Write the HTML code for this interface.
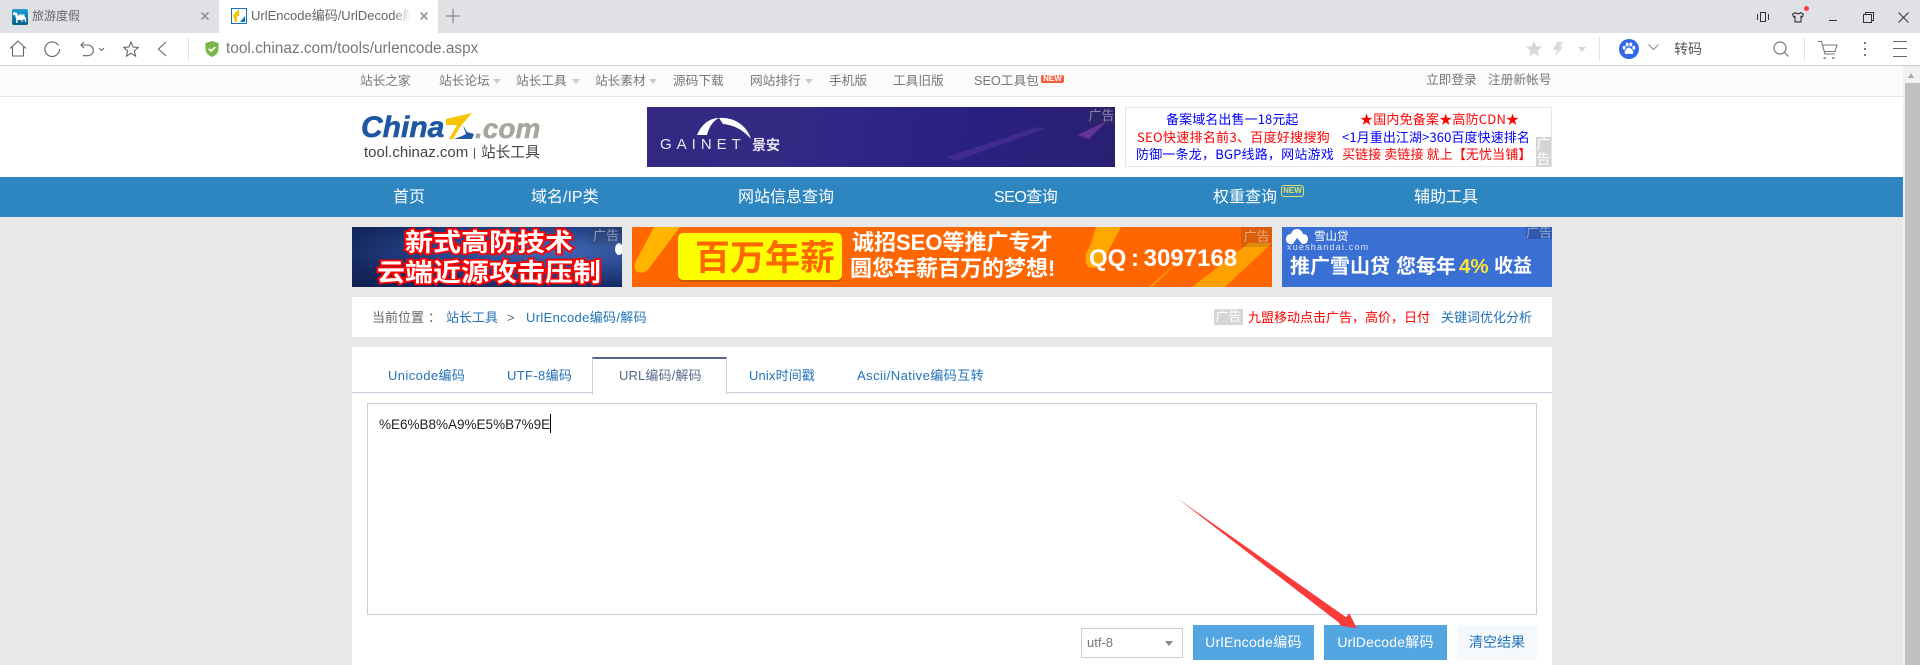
<!DOCTYPE html>
<html lang="zh"><head><meta charset="utf-8"><title>UrlEncode编码/UrlDecode解码</title>
<style>
html,body{margin:0;padding:0;width:1920px;height:665px;overflow:hidden;background:#e8e8e8}
body{position:relative;font-family:"Liberation Sans","Noto Sans CJK SC",sans-serif;font-size:13px;color:#777}
div,span,svg{position:absolute}
.t{white-space:nowrap;line-height:20px}
.n{color:#fff;font-size:16px}
.s{color:#777;font-size:12.7px}
.a{color:#2272b9;font-size:13px}
.c{width:0;height:0;border-left:4px solid transparent;border-right:4px solid transparent;border-top:5px solid #bbb}
.b{font-family:"WenQuanYi Zen Hei","Noto Sans CJK SC",sans-serif;font-size:13px;line-height:18px;white-space:nowrap}
.l{background:rgba(60,60,60,.18);color:rgba(255,255,255,.45);font-size:13px;line-height:17px;text-align:center;height:17px}
</style></head><body>
<!-- tab strip -->
<div style="left:0;top:0;width:1920px;height:33px;background:#e0e1e5"></div>
<div style="left:219px;top:0;width:219px;height:33px;background:#fff"></div>
<svg style="left:12px;top:9px" width="16" height="16" viewBox="0 0 16 16"><defs><linearGradient id="g" x1="0" y1="0" x2="0" y2="1"><stop offset="0" stop-color="#1fa0d8"/><stop offset="1" stop-color="#0a5f86"/></linearGradient></defs><rect width="16" height="16" rx="2" fill="url(#g)"/><path d="M1 4l2-1 2 1 1 3 2-2 2 1 2-1 1 3 1 1v4h-1l-.5-3-2 1v2h-1V11H6l-1 3H4l.3-4L3 6H1z" fill="#fff"/></svg>
<div class="t" style="left:32px;top:6px;font-size:12px;color:#666">旅游度假</div>
<svg style="left:201px;top:12px" width="8" height="8" viewBox="0 0 8 8"><path d="M.5.5l7 7M7.500.5l-7 7" stroke="#888" stroke-width="1.500"/></svg>
<svg style="left:231px;top:8px" width="16" height="16" viewBox="0 0 16 16"><rect x=".5" y=".5" width="15" height="15" fill="#fff" stroke="#1673b8"/><path d="M2 7l6-6v7H6v6H4z" fill="#f8c400"/><path d="M9 14l5-6v6z" fill="#1673b8"/></svg>
<div style="left:251px;top:6px;width:159px;height:20px;overflow:hidden"><div class="t" style="left:0;top:0;font-size:13px;color:#666">UrlEncode编码/UrlDecode解码</div><div style="right:0;top:0;width:16px;height:20px;background:linear-gradient(90deg,rgba(255,255,255,0),#fff)"></div></div>
<svg style="left:420px;top:12px" width="8" height="8" viewBox="0 0 8 8"><path d="M.5.5l7 7M7.500.5l-7 7" stroke="#888" stroke-width="1.500"/></svg>
<svg style="left:446px;top:9px" width="14" height="14" viewBox="0 0 14 14"><path d="M7 0v14M0 7h14" stroke="#777" stroke-width="1"/></svg>
<!-- window controls -->
<svg style="left:1757px;top:12px" width="12" height="10" viewBox="0 0 12 10" fill="none" stroke="#333"><rect x="3.500" y=".5" width="5" height="9"/><path d="M.5 2v6M11.500 2v6"/></svg>
<svg style="left:1792px;top:12px" width="12" height="11" viewBox="0 0 12 11" fill="none" stroke="#333" stroke-width="1.100"><path d="M3.500.6L.6 2.200l1 2.600 1.400-.5v5.600h6V4.300l1.400.5 1-2.600L8.500.6c-.5 1.500-4.500 1.500-5 0z"/></svg>
<div style="left:1804px;top:6px;width:5px;height:5px;border-radius:50%;background:#fb3c3c"></div>
<div style="left:1829px;top:20px;width:8px;height:1px;background:#333"></div>
<svg style="left:1863px;top:12px" width="11" height="11" viewBox="0 0 11 11" fill="none" stroke="#333"><rect x=".5" y="2.500" width="8" height="8"/><path d="M2.500 2.500V.5h8v8h-2"/></svg>
<svg style="left:1898px;top:12px" width="11" height="11" viewBox="0 0 11 11"><path d="M.5.5l10 10M10.500.5l-10 10" stroke="#333"/></svg>
<!-- toolbar -->
<div style="left:0;top:33px;width:1920px;height:32px;background:#fff"></div>
<div style="left:0;top:65px;width:1920px;height:1px;background:#ccc"></div>
<svg style="left:9px;top:40px" width="18" height="17" viewBox="0 0 18 17" fill="none" stroke="#666" stroke-width="1.100"><path d="M1 8.500L9 1l8 7.500M3.500 7v9h11V7"/></svg>
<svg style="left:44px;top:41px" width="17" height="16" viewBox="0 0 17 16" fill="none" stroke="#666" stroke-width="1.100"><path d="M14.500 4.500A7.300 7.300 0 1 0 15.500 8"/></svg>
<svg style="left:80px;top:41px" width="25" height="16" viewBox="0 0 25 16" fill="none" stroke="#666" stroke-width="1.100"><path d="M4 1L1 4l3 3M1 4h7a5.300 5.300 0 0 1 0 10.700H3"/><path d="M19 7l2.500 2.500L24 7" stroke-width="1"/></svg>
<svg style="left:123px;top:41px" width="16" height="16" viewBox="0 0 16 16" fill="none" stroke="#666" stroke-width="1.100"><path d="M8 1l2 5 5.400.4-4.100 3.500 1.300 5.300L8 12.300l-4.600 2.900 1.300-5.300L.6 6.400 6 6z"/></svg>
<svg style="left:157px;top:41px" width="10" height="16" viewBox="0 0 10 16" fill="none" stroke="#666" stroke-width="1.100"><path d="M9 1L1.500 8 9 15"/></svg>
<div style="left:188px;top:37px;width:1px;height:24px;background:#e4e4e4"></div>
<svg style="left:205px;top:41px" width="14" height="16" viewBox="0 0 14 16"><path d="M7 0l6.500 2v6c0 4-3 6.500-6.500 8C3.500 14.500.5 12 .5 8V2z" fill="#7ab648"/><path d="M3.800 7.800l2.300 2.300 4-4" fill="none" stroke="#fff" stroke-width="1.800"/></svg>
<div class="t" style="left:226px;top:39px;font-size:15.400px;color:#777">tool.chinaz.com/tools/urlencode.aspx</div>
<svg style="left:1526px;top:41px" width="16" height="15" viewBox="0 0 16 15"><path d="M8 0l2.300 5.300 5.700.5-4.300 3.800 1.300 5.600L8 12.200 3 15.200l1.300-5.600L0 5.800l5.700-.5z" fill="#d5d7de"/></svg>
<svg style="left:1553px;top:42px" width="10" height="15" viewBox="0 0 10 15"><path d="M4 0h6L7 5h3L2 15l2-7H0z" fill="#d9dbe0"/></svg>
<div class="c" style="left:1578px;top:47px;border-top-color:#d5d7dc"></div>
<div style="left:1599px;top:37px;width:1px;height:24px;background:#e4e4e4"></div>
<svg style="left:1619px;top:39px" width="20" height="20" viewBox="0 0 20 20"><circle cx="10" cy="10" r="10" fill="#3068e8"/><g fill="#fff"><ellipse cx="5.200" cy="8.700" rx="1.500" ry="2"/><ellipse cx="8.200" cy="5.500" rx="1.500" ry="2"/><ellipse cx="11.800" cy="5.500" rx="1.500" ry="2"/><ellipse cx="14.800" cy="8.700" rx="1.500" ry="2"/><path d="M10 8.500c2 0 4.800 3.800 4.300 5.500-.5 1.700-3 .7-4.300.7s-3.800 1-4.300-.7C5.200 12.300 8 8.500 10 8.500z"/></g></svg>
<svg style="left:1648px;top:44px" width="11" height="7" viewBox="0 0 11 7" fill="none" stroke="#888" stroke-width="1.100"><path d="M.5.500l5 5 5-5"/></svg>
<div class="t" style="left:1674px;top:39px;font-size:14px;color:#555">转码</div>
<svg style="left:1773px;top:41px" width="16" height="16" viewBox="0 0 16 16" fill="none" stroke="#777" stroke-width="1.200"><circle cx="7" cy="7" r="6"/><path d="M11.500 11.500l4 4"/></svg>
<div style="left:1804px;top:37px;width:1px;height:24px;background:#e4e4e4"></div>
<svg style="left:1817px;top:40px" width="21" height="19" viewBox="0 0 21 19" fill="none" stroke="#777" stroke-width="1.100"><path d="M.5 1.500h4l3.500 12.500h10M6 5h14l-2 6.500H8"/><path d="M6.500 18h2.500M15 18h2.500" stroke-width="1.600"/></svg>
<div style="left:1864px;top:42px;width:2px;height:2px;background:#777"></div><div style="left:1864px;top:48px;width:2px;height:2px;background:#777"></div><div style="left:1864px;top:54px;width:2px;height:2px;background:#777"></div>
<div style="left:1893px;top:41px;width:14px;height:1px;background:#666"></div><div style="left:1893px;top:48px;width:14px;height:1px;background:#666"></div><div style="left:1893px;top:56px;width:14px;height:1px;background:#666"></div>
<!-- scrollbar -->
<div style="left:1903px;top:66px;width:17px;height:599px;background:#f1f1f1"></div>
<div style="left:1905px;top:83px;width:15px;height:582px;background:#c0c0c0"></div>
<div style="left:1908px;top:73px;width:0;height:0;border-left:3.500px solid transparent;border-right:3.500px solid transparent;border-bottom:5px solid #a8a8a8"></div>
<!-- subnav -->
<div style="left:0;top:66px;width:1903px;height:30px;background:#fbfbfb"></div>
<div style="left:0;top:96px;width:1903px;height:1px;background:#e5e5e5"></div>
<div class="t s" style="left:360px;top:71px">站长之家</div>
<div class="t s" style="left:439px;top:71px">站长论坛</div><div class="c" style="left:493px;top:79px;border-top-color:#ccc"></div>
<div class="t s" style="left:516px;top:71px">站长工具</div><div class="c" style="left:572px;top:79px;border-top-color:#ccc"></div>
<div class="t s" style="left:595px;top:71px">站长素材</div><div class="c" style="left:649px;top:79px;border-top-color:#ccc"></div>
<div class="t s" style="left:673px;top:71px">源码下载</div>
<div class="t s" style="left:750px;top:71px">网站排行</div><div class="c" style="left:805px;top:79px;border-top-color:#ccc"></div>
<div class="t s" style="left:829px;top:71px">手机版</div>
<div class="t s" style="left:893px;top:71px">工具旧版</div>
<div class="t s" style="left:974px;top:71px">SEO工具包</div>
<div style="left:1041px;top:75px;width:23px;height:8px;background:#fb5a3c;border-radius:2px;color:#fff;font-size:8px;line-height:8px;text-align:center;font-weight:bold">NEW</div>
<div class="t s" style="left:1426px;top:70px">立即登录</div>
<div class="t s" style="left:1488px;top:70px">注册新帐号</div>
<!-- header -->
<div style="left:0;top:97px;width:1903px;height:80px;background:#fff"></div>
<div class="t" style="left:361px;top:111px;font-size:30px;line-height:34px;font-weight:bold;font-style:italic;color:#1f57a4;-webkit-text-stroke:.6px #1f57a4">China</div>
<svg style="left:446px;top:113px" width="29" height="27" viewBox="0 0 29 27"><path d="M0 6L26 0 14 14 7 26 3 26 11 12 0 12z" fill="#f8c400"/><path d="M17 12l4 7 7 2-2 5H8l8-3 4-2z" fill="#1f57a4"/></svg>
<div class="t" style="left:475px;top:112px;font-size:28px;line-height:34px;font-weight:bold;font-style:italic;color:#a8a59e;-webkit-text-stroke:.5px #a8a59e">.com</div>
<div class="t" style="left:364px;top:143px;font-size:15px;color:#444">tool.chinaz.com</div>
<div style="left:474px;top:148px;width:1px;height:11px;background:#555"></div>
<div class="t" style="left:481px;top:143px;font-size:14.700px;color:#444">站长工具</div>
<!-- gainet ad -->
<div style="left:647px;top:107px;width:468px;height:60px;background:linear-gradient(100deg,#2e2380 0,#342a88 28%,#2d2484 50%,#2a2080 70%,#291f72 100%);overflow:hidden">
<svg style="left:0;top:0" width="468" height="60" viewBox="0 0 468 60"><path d="M0 0H167L140 60H0z" fill="#352b83" opacity=".8"/><path d="M300 50l90-30 8 2-90 32z" fill="#4a2f98" opacity=".7"/><path d="M430 28l30-14-18 18z" fill="#7a3aa8" opacity=".7"/><path d="M50 28C54 18 62 11 72 11 66 14 62 20 60 28z" fill="#fff"/><path d="M72 11C88 10 100 19 104 32 97 24 88 18 76 17z" fill="#fff"/></svg>
<div class="t" style="left:13px;top:28px;font-size:15px;line-height:20px;letter-spacing:5px;color:#e8e6f2">GAINET</div>
<div class="t" style="left:105px;top:29px;font-size:14px;line-height:18px;font-weight:bold;color:#e8e6f2">景安</div>
<div class="l" style="right:0;top:0;width:27px">广告</div>
</div>
<!-- text ad -->
<div style="left:1125px;top:107px;width:425px;height:58px;border:1px solid #e5e5e5;background:#fff"></div>
<div class="b" style="left:1166px;top:110px;color:#00f;letter-spacing:.1px">备案域名出售一18元起</div>
<div class="b" style="left:1137px;top:128px;color:#f00;letter-spacing:.3px">SEO快速排名前3、百度好搜搜狗</div>
<div class="b" style="left:1136px;top:145px;color:#00f;letter-spacing:.2px">防御一条龙，BGP线路，网站游戏</div>
<div class="b" style="left:1360px;top:110px;color:#f00;letter-spacing:.2px">★国内免备案★高防CDN★</div>
<div class="b" style="left:1342px;top:128px;color:#00f;letter-spacing:.1px">&lt;1月重出江湖&gt;360百度快速排名</div>
<div class="b" style="left:1342px;top:145px;color:#f00;letter-spacing:.1px">买链接 卖链接 就上【无忧当铺】</div>
<div style="left:1536px;top:137px;width:15px;height:30px;background:#d4d4d4;color:#fff;font-size:14px;line-height:15px;text-align:center">广告</div>
<!-- nav -->
<div style="left:0;top:177px;width:1903px;height:40px;background:#2e86c1"></div>
<div class="t n" style="left:393px;top:188px">首页</div>
<div class="t n" style="left:531px;top:188px">域名/IP类</div>
<div class="t n" style="left:738px;top:188px">网站信息查询</div>
<div class="t n" style="left:994px;top:188px;letter-spacing:-.5px">SEO查询</div>
<div class="t n" style="left:1213px;top:188px">权重查询</div>
<div class="t n" style="left:1414px;top:188px">辅助工具</div>
<div style="left:1281px;top:185px;width:21px;height:10px;border:1px solid #e5e06a;border-radius:3px;color:#e5e06a;font-size:8px;line-height:10px;text-align:center;font-weight:bold">NEW</div>
<!-- ad 1 -->
<div style="left:352px;top:227px;width:270px;height:60px;overflow:hidden;background:radial-gradient(ellipse at 75% 40%,#4366b4 0,#2a4a92 35%,#14285f 75%,#0f2050 100%)">
<div style="left:263px;top:16px;width:8px;height:12px;border-radius:50%;background:#fff"></div>
<div class="l" style="right:0;top:0;width:32px;height:18px">广告</div>
</div>
<div class="t" style="left:405px;top:233px;font-size:28px;font-weight:bold;color:#fff;-webkit-text-stroke:4px #f00;paint-order:stroke fill;transform:scaleY(.9)">新式高防技术</div>
<div class="t" style="left:377px;top:263px;font-size:28px;font-weight:bold;color:#fff;-webkit-text-stroke:4px #f00;paint-order:stroke fill;transform:scaleY(.9)">云端近源攻击压制</div>
<!-- ad 2 -->
<div style="left:632px;top:227px;width:640px;height:60px;overflow:hidden;background:#ff6600">
<svg style="left:0;top:0" width="640" height="60" viewBox="0 0 640 60"><path d="M22 0H48L18 40C12 50 -2 46 4 34z" fill="#ffb400"/><path d="M464 0H489L470 36C464 44 452 42 454 32 452 26 458 22 460 14z" fill="#ffa800"/><path d="M617 16H640L593 60H560z" fill="#ffa000"/><path d="M549 32L520 60H517z" fill="#ffa000"/></svg>
<div style="left:46px;top:6px;width:164px;height:47px;background:#ff0;border-radius:5px;box-shadow:0 2px 0 #cc5a00"></div>
<div class="t" style="left:63px;top:22px;font-size:35px;font-weight:bold;color:#ff6600;white-space:nowrap">百万年薪</div>
<div class="t" style="left:220px;top:6px;font-size:22px;font-weight:bold;color:#fff">诚招SEO等推广专才</div>
<div class="t" style="left:218px;top:32px;font-size:22px;font-weight:bold;color:#fff">圆您年薪百万的梦想!</div>
<div class="t" style="left:457px;top:22px;font-size:24px;font-weight:bold;color:#fff;word-spacing:-2px">QQ : 3097168</div>
<div class="l" style="right:0;top:0;width:31px;height:20px;line-height:20px">广告</div>
</div>
<!-- ad 3 -->
<div style="left:1282px;top:227px;width:270px;height:60px;overflow:hidden;background:#3a6fd3">
<svg style="left:4px;top:2px" width="22" height="15" viewBox="0 0 22 15"><path d="M11 0c3 0 5 2 6 5 3 0 5 2 5 5s-2 5-5 5h-1l-5-6-4 6H5c-3 0-5-2-5-5s2-5 5-5c1-3 3-5 6-5z" fill="#fff"/><path d="M11 9l-4 6h9z" fill="#3a6fd3"/></svg>
<div class="t" style="left:32px;top:0;font-size:11.500px;color:#fff">雪山贷</div>
<div class="t" style="left:5px;top:10px;font-size:9px;letter-spacing:1.200px;color:#dbe6f8">xueshandai.com</div>
<div class="t" style="left:8px;top:30px;font-size:20px;font-weight:bold;color:#fff">推广雪山贷</div>
<div class="t" style="left:114px;top:30px;font-size:20px;font-weight:bold;color:#fff">您每年</div>
<div class="t" style="left:177px;top:30px;font-size:20.500px;font-weight:bold;color:#ffe23a">4%</div>
<div class="t" style="left:212px;top:30px;font-size:19px;font-weight:bold;color:#fff">收益</div>
<div class="l" style="right:0;top:0;width:26px;height:12px;line-height:12px;background:rgba(40,70,140,.5)">广告</div>
</div>
<!-- breadcrumb -->
<div style="left:352px;top:297px;width:1200px;height:40px;background:#fff"></div>
<div class="t" style="left:372px;top:308px;font-size:13px;color:#666">当前位置</div>
<div class="t" style="left:428px;top:308px;font-size:13px;color:#666">：</div>
<div class="t a" style="left:446px;top:308px">站长工具</div>
<div class="t" style="left:507px;top:308px;font-size:13px;color:#666">&gt;</div>
<div class="t a" style="left:526px;top:308px;letter-spacing:.33px">UrlEncode编码/解码</div>
<div style="left:1214px;top:309px;width:29px;height:16px;background:#d6d6d6;color:#fff;font-size:13px;line-height:16px;text-align:center">广告</div>
<div class="t" style="left:1248px;top:308px;font-size:13px;color:#f00">九盟移动点击广告，高价，日付</div>
<div class="t a" style="left:1441px;top:308px">关键词优化分析</div>
<!-- main panel -->
<div style="left:352px;top:347px;width:1200px;height:318px;background:#fff"></div>
<div style="left:352px;top:392px;width:1200px;height:1px;background:#c5cfde"></div>
<div style="left:592px;top:357px;width:133px;height:35px;background:#fff;border-left:1px solid #c5cfde;border-right:1px solid #c5cfde;border-top:2px solid #56678a;border-bottom:1px solid #fff"></div>
<div class="t a" style="left:388px;top:366px;letter-spacing:.4px">Unicode编码</div>
<div class="t a" style="left:507px;top:366px;letter-spacing:.35px">UTF-8编码</div>
<div class="t" style="left:619px;top:366px;font-size:13px;color:#56678a;letter-spacing:.13px">URL编码/解码</div>
<div class="t a" style="left:749px;top:366px;letter-spacing:.15px">Unix时间戳</div>
<div class="t a" style="left:857px;top:366px;letter-spacing:.45px">Ascii/Native编码互转</div>
<div style="left:367px;top:403px;width:1168px;height:210px;border:1px solid #c5cfde;background:#fff"></div>
<div class="t" style="left:379px;top:415px;font-size:13.500px;color:#222">%E6%B8%A9%E5%B7%9E</div>
<div style="left:550px;top:414px;width:1px;height:19px;background:#000"></div>
<!-- controls -->
<div style="left:1081px;top:628px;width:100px;height:28px;border:1px solid #c5cfde;background:#fff"></div>
<div class="t" style="left:1087px;top:633px;font-size:13px;color:#777">utf-8</div>
<div class="c" style="left:1165px;top:641px;border-top-color:#888"></div>
<div class="t" style="left:1193px;top:625px;width:121px;height:35px;line-height:35px;background:#54a6e2;color:#fff;font-size:14px;letter-spacing:.3px;text-align:center">UrlEncode编码</div>
<div class="t" style="left:1324px;top:625px;width:123px;height:35px;line-height:35px;background:#54a6e2;color:#fff;font-size:14px;letter-spacing:.2px;text-align:center">UrlDecode解码</div>
<div class="t" style="left:1457px;top:625px;width:80px;height:35px;line-height:35px;background:#f5f9fc;color:#2272b9;font-size:14px;text-align:center">清空结果</div>
<svg style="left:0;top:0" width="1920" height="665"><path d="M1177.300 498.300L1346 617.300 1349.300 613.300 1356.700 628.300 1340.700 625.700 1339 622.700z" fill="#fb3a3a"/></svg>
</body></html>
